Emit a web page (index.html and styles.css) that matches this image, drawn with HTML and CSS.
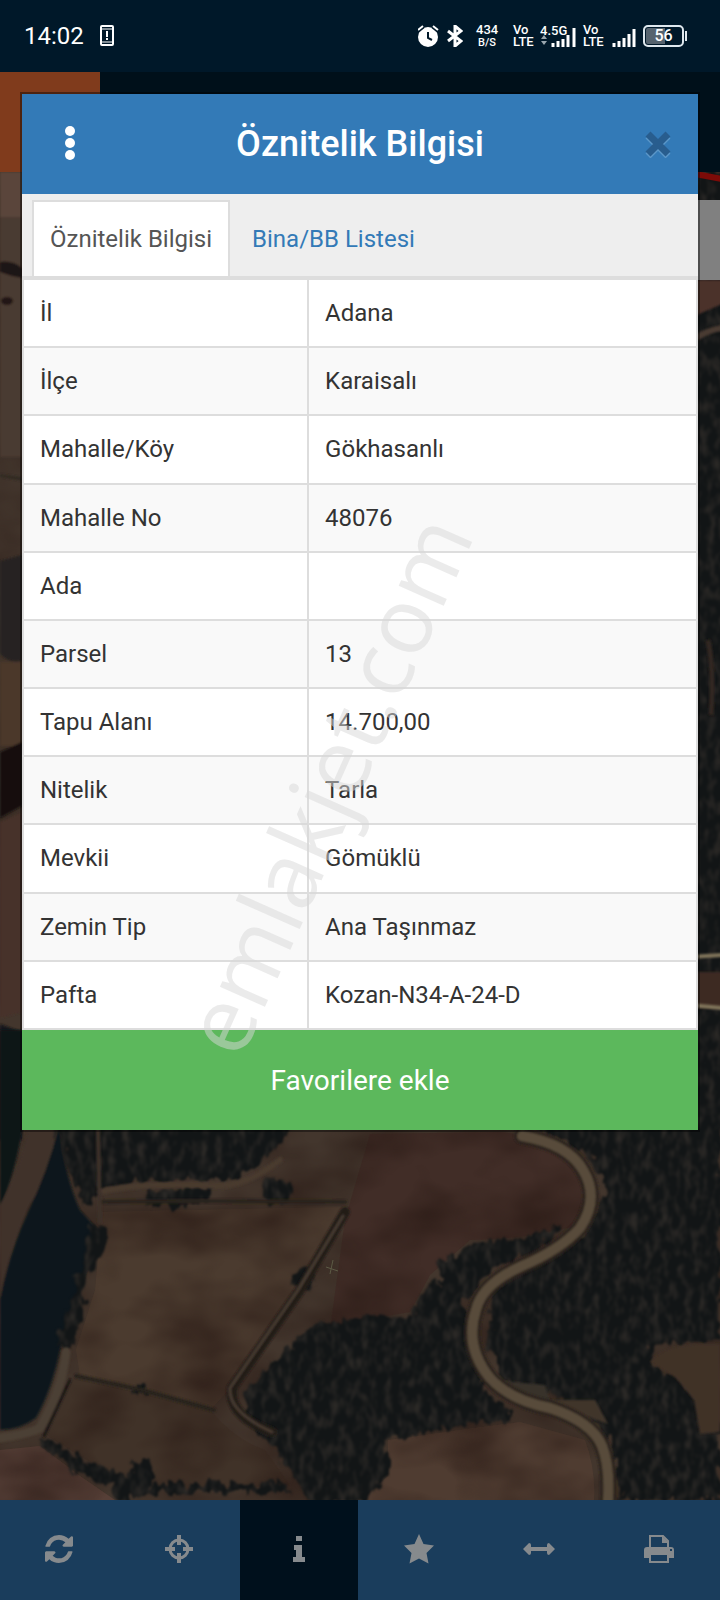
FILE: index.html
```html
<!DOCTYPE html>
<html lang="tr">
<head>
    <meta charset="UTF-8">
    <meta name="viewport" content="width=device-width, initial-scale=1.0">
    <title>Öznitelik Bilgisi</title>
    <link rel="stylesheet" href="styles.css">
</head>
<body>
    <!-- Harita -->
    <svg class="map" viewBox="0 0 720 1600" preserveAspectRatio="xMidYMid slice" aria-hidden="true">
        <defs>
            <filter id="trees" x="-5%" y="-5%" width="110%" height="110%" color-interpolation-filters="sRGB">
                <feTurbulence type="fractalNoise" baseFrequency="0.13 0.07" numOctaves="2" seed="4" result="noise"/>
                <feDisplacementMap in="SourceGraphic" in2="noise" scale="18" xChannelSelector="R" yChannelSelector="G" result="shape"/>
                <feColorMatrix in="noise" type="matrix" values="0 0 0 0 0.17  0 0 0 0 0.16  0 0 0 0 0.15  2.6 0 0 0 -1.1" result="light"/>
                <feComposite in="light" in2="shape" operator="in" result="crowns"/>
                <feMerge result="wood"><feMergeNode in="shape"/><feMergeNode in="crowns"/></feMerge>
                <feGaussianBlur in="wood" stdDeviation="0.8"/>
            </filter>
            <filter id="soil" x="0" y="0" width="100%" height="100%" color-interpolation-filters="sRGB">
                <feTurbulence type="fractalNoise" baseFrequency="0.012 0.02" numOctaves="3" seed="9" result="noise"/>
                <feColorMatrix in="noise" type="matrix" values="0 0 0 0 0.16  0 0 0 0 0.10  0 0 0 0 0.08  1.3 0 0 0 -0.45" result="dark"/>
                <feComposite in="dark" in2="SourceGraphic" operator="in" result="patches"/>
                <feMerge><feMergeNode in="SourceGraphic"/><feMergeNode in="patches"/></feMerge>
            </filter>
            <filter id="soft"><feGaussianBlur stdDeviation="1"/></filter>
        </defs>

        <rect width="720" height="1600" fill="#43362d" filter="url(#soil)"/>

        <!-- sol kenar -->
        <g filter="url(#soft)">
            <path d="M0 172h22v45H0z" fill="#5a443b"/>
            <path d="M0 217h22v240H0z" fill="#4a3a30"/>
            <path d="M0 262q12-2 22 6v10q-12-2-22-6z" fill="#1d1715"/>
            <ellipse cx="7" cy="301" rx="6" ry="4" fill="#211815"/>
            <path d="M0 474l22 3v4l-22-4z" fill="#302b22"/>
            <path d="M0 561l22-6v105q-10 5-22-6z" fill="#262320"/>
            <path d="M0 662h22v84H0z" fill="#4b372c"/>
            <path d="M0 752l22-10v64l-22 12z" fill="#13110e"/>
            <path d="M0 822l22-10v200l-22 6z" fill="#473229"/>
            <path d="M0 1024l22 8v108H0z" fill="#14191a"/>
        </g>

        <!-- su -->
        <g filter="url(#soft)">
            <path d="M0 1030H30Q28 1150 0 1206z" fill="#101416"/>
            <path d="M28 1130H56Q52 1175 30 1204Q8 1250 0 1300V1205Q20 1170 28 1130z" fill="#3f3329"/>
            <path d="M60 1130Q66 1180 80 1210L100 1232Q88 1270 72 1310L60 1350Q52 1390 36 1418Q20 1430 0 1430V1300Q10 1250 28 1212Q48 1170 58 1130z" fill="#0d191c"/>
        </g>

        <!-- tarlalar -->
        <g filter="url(#soil)">
            <path d="M102 1212L345 1207L342 1220L300 1286L228 1390L212 1408L80 1376L76 1350L95 1290z" fill="#4b3b2f"/>
            <path d="M74 1378L210 1410Q235 1440 265 1450L290 1485L180 1490L110 1474L48 1436z" fill="#403228"/>
            <path d="M0 1450L40 1446L80 1476L115 1500H0z" fill="#563f37"/>
            <path d="M370 1134L500 1132Q570 1140 586 1170Q596 1200 575 1226Q520 1240 470 1240L430 1275L410 1312L375 1318L330 1330L345 1220z" fill="#412d27"/>
            <path d="M388 1440L520 1422L585 1440Q596 1470 594 1500H360L388 1476z" fill="#4f3c31"/>
        </g>

        <!-- ormanlar -->
        <g fill="#121516" filter="url(#trees)">
            <path d="M55 1125L290 1125L275 1150L238 1178L140 1182L100 1190L86 1205L72 1180z"/>
            <path d="M145 1192L210 1186L212 1202L148 1208z"/>
            <ellipse cx="278" cy="1191" rx="15" ry="14"/>
            <ellipse cx="303" cy="1280" rx="12" ry="11"/>
            <ellipse cx="141" cy="1389" rx="7" ry="5"/>
            <path d="M92 1225L106 1228L104 1250L88 1280L74 1345L58 1344L70 1305z"/>
            <path d="M40 1440L56 1442L90 1466L128 1474L134 1460L152 1460L152 1484L285 1484L290 1492L152 1492L118 1502L112 1486L72 1470z"/>
            <path d="M310 1328L370 1315L412 1318L430 1282L460 1290L466 1330L485 1392L510 1410L510 1420L430 1430L386 1440L388 1476L360 1502H310L285 1460L245 1418L245 1392L270 1366z"/>
            <path d="M470 1244L520 1238L562 1226L540 1250L490 1270L468 1300L440 1290L440 1262z"/>
            <path d="M500 1125H720V1340L650 1345L655 1365L700 1400L720 1430V1500H620L612 1450L596 1418L560 1398L502 1382L488 1340L494 1290L520 1268L590 1230L606 1190L592 1156L550 1132z"/>
            <path d="M690 172h40v960h-40z"/>
        </g>

        <!-- ağaçsız alanlar -->
        <g filter="url(#soft)">
            <path d="M650 1362Q664 1342 720 1344V1432L700 1434L694 1400L676 1378z" fill="#3f3026"/>
            <path d="M690 280h32v24l-32 14z" fill="#4b3129"/>
            <path d="M690 972h32v36h-32z" fill="#3d2b24"/>
            <path d="M696 338q12-8 26-10" fill="none" stroke="#493a32" stroke-width="6"/>
            <path d="M708 640q6 30 3 75" fill="none" stroke="#302720" stroke-width="5"/>
            <path d="M550 1400L595 1400L608 1424L570 1410z" fill="#41342b"/>
            <path d="M490 1380L545 1385L550 1402L510 1398z" fill="#38322a"/>
        </g>

        <!-- yollar -->
        <g fill="none" stroke-linecap="round" filter="url(#soft)">
            <path d="M522 1136Q568 1144 583 1170Q600 1198 580 1228Q560 1250 522 1266Q482 1284 476 1310Q464 1346 490 1378Q510 1400 550 1408Q592 1422 602 1446Q610 1466 608 1500" stroke="#2b241f" stroke-width="16"/>
            <path d="M522 1136Q568 1144 583 1170Q600 1198 580 1228Q560 1250 522 1266Q482 1284 476 1310Q464 1346 490 1378Q510 1400 550 1408Q592 1422 602 1446Q610 1466 608 1500" stroke="#584b3b" stroke-width="10"/>
            <path d="M345 1212L300 1290L232 1388Q228 1416 272 1432" stroke="#211c18" stroke-width="10"/>
            <path d="M343 1216L298 1290L230 1388Q228 1412 272 1432" stroke="#463a32" stroke-width="3"/>
            <path d="M100 1202Q180 1200 345 1202" stroke="#29241c" stroke-width="4"/>
            <path d="M100 1192Q140 1182 220 1186Q250 1184 280 1160" stroke="#483a2f" stroke-width="6"/>
            <path d="M98 1130L100 1222" stroke="#3d302a" stroke-width="4"/>
            <path d="M76 1376L142 1390L214 1410" stroke="#27211a" stroke-width="4"/>
            <path d="M0 1438Q28 1434 40 1428Q62 1390 66 1352" stroke="#4b3f34" stroke-width="9"/>
            <path d="M44 1436L70 1380" stroke="#1a1613" stroke-width="3"/>
            <path d="M690 957l32-2" stroke="#80745a" stroke-width="4"/>
            <path d="M690 1005l32 3" stroke="#80745a" stroke-width="4"/>
        </g>
        <path d="M326 1267l12 4M333 1260l-3 14" stroke="#5c5a45" stroke-width="1"/>
        <path d="M690 173l32 6" stroke="#7c0b08" stroke-width="6"/>
        <rect x="600" y="200" width="120" height="80" fill="#808080"/>
    </svg>

    <div class="app-header"><div class="app-logo"></div></div>

    <!-- Durum çubuğu -->
    <div class="status-bar">
        <span class="clock">14:02</span>
        <svg class="notice" width="14" height="22" viewBox="0 0 14 22">
            <rect x="1" y="1" width="12" height="19" rx="1" fill="none" stroke="#fff" stroke-width="2"/>
            <path d="M1 4h12M1 17h12" stroke="#fff" stroke-width="1"/>
            <path d="M7 6v6M7 13v2" stroke="#fff" stroke-width="2"/>
        </svg>

        <div class="status-right">
            <svg width="22" height="22" viewBox="0 0 22 22">
                <circle cx="10" cy="12" r="10" fill="#fff"/>
                <path d="M0 5l5-4M20 5l-5-4" stroke="#001829" stroke-width="5"/>
                <path d="M0 5l5-4M20 5l-5-4" stroke="#fff" stroke-width="2"/>
                <path d="M10 7v6l4 2" fill="none" stroke="#001829" stroke-width="2"/>
            </svg>
            <svg class="bluetooth" width="16" height="22" viewBox="0 0 16 22">
                <path d="M1 6l13 10-6 5V1l6 5L1 16" fill="none" stroke="#fff" stroke-width="3"/>
            </svg>
            <div class="speed">434<br><small>B/S</small></div>
            <div class="volte">Vo<br>LTE</div>
            <svg width="36" height="24" viewBox="0 0 36 24">
                <text x="0" y="11" class="net">4.5G</text>
                <path d="M1 15l3-4 3 4zM1 17l3 4 3-4z" fill="#9ba7af"/>
                <path d="M13 23v-4M18 23v-6M23 23v-8M28 23V11M34 23V4" stroke="#fff" stroke-width="3"/>
            </svg>
            <div class="volte">Vo<br>LTE</div>
            <svg width="26" height="24" viewBox="0 0 26 24">
                <path d="M4 23v-4M9 23v-6M14 23v-9M19 23V10M24 23V5" stroke="#fff" stroke-width="3"/>
            </svg>
            <div class="battery">56</div>
        </div>
    </div>

    <!-- Pencere -->
    <div class="modal">
        <div class="modal-header">
            <button type="button" class="menu" aria-label="Menü">
                <svg width="10" height="36" viewBox="0 0 10 36" fill="#fff">
                    <circle cx="5" cy="5" r="5"/><circle cx="5" cy="17" r="5"/><circle cx="5" cy="29" r="5"/>
                </svg>
            </button>
            <h1>Öznitelik Bilgisi</h1>
            <button type="button" class="close" aria-label="Kapat">
                <svg width="26" height="28" viewBox="0 0 26 28" fill="none" stroke-width="7">
                    <path d="M3 6l20 20M23 6L3 26" stroke="#5b97c9"/>
                    <path d="M3 4l20 20M23 4L3 24" stroke="#285d8e"/>
                </svg>
            </button>
        </div>

        <div class="tabs">
            <a href="#oznitelik" class="active">Öznitelik Bilgisi</a>
            <a href="#bina">Bina/BB Listesi</a>
        </div>

        <table>
            <tr><th scope="row">İl</th><td>Adana</td></tr>
            <tr><th scope="row">İlçe</th><td>Karaisalı</td></tr>
            <tr><th scope="row">Mahalle/Köy</th><td>Gökhasanlı</td></tr>
            <tr><th scope="row">Mahalle No</th><td>48076</td></tr>
            <tr><th scope="row">Ada</th><td></td></tr>
            <tr><th scope="row">Parsel</th><td>13</td></tr>
            <tr><th scope="row">Tapu Alanı</th><td>14.700,00</td></tr>
            <tr><th scope="row">Nitelik</th><td>Tarla</td></tr>
            <tr><th scope="row">Mevkii</th><td>Gömüklü</td></tr>
            <tr><th scope="row">Zemin Tip</th><td>Ana Taşınmaz</td></tr>
            <tr><th scope="row">Pafta</th><td>Kozan-N34-A-24-D</td></tr>
        </table>

        <button type="button" class="favorite">Favorilere ekle</button>
        <div class="watermark">emlakjet.com</div>
    </div>

    <!-- Alt menü -->
    <nav class="toolbar">
        <button type="button" aria-label="Yenile">
            <svg width="28" height="28" viewBox="0 0 1536 1536"><path d="M1511 928q0 5-1 7-64 268-268 434.500T764 1536q-146 0-282.500-55T238 1324l-129 129q-19 19-45 19t-45-19-19-45V960q0-26 19-45t45-19h448q26 0 45 19t19 45-19 45l-137 137q71 66 161 102t187 36q134 0 250-65t186-179q11-17 53-117 8-23 30-23h192q13 0 22.500 9.500t9.500 22.500zm25-800v448q0 26-19 45t-45 19h-448q-26 0-45-19t-19-45 19-45l138-138Q969 256 768 256q-134 0-250 65T332 500q-11 17-53 117-8 23-30 23H50q-13 0-22.500-9.500T18 608v-7q65-268 270-434.500T768 0q146 0 284 55.500T1297 212l130-129q19-19 45-19t45 19 19 45z"/></svg>
        </button>
        <button type="button" aria-label="Konum">
            <svg width="28" height="28" viewBox="0 0 28 28">
                <circle cx="14" cy="14" r="9" fill="none" stroke="#868a8d" stroke-width="3"/>
                <path d="M12 0h4v10h-4zM12 18h4v10h-4zM0 12h10v4H0zM18 12h10v4H18z"/>
            </svg>
        </button>
        <button type="button" class="active" aria-label="Bilgi">
            <svg width="12" height="26" viewBox="0 0 12 26"><path d="M3 0h6v5H3zM1 9h8v12h3v5H0v-5h3v-7H1z" stroke-linejoin="round"/></svg>
        </button>
        <button type="button" aria-label="Favoriler">
            <svg width="30" height="30" viewBox="0 0 30 30"><path d="M15 0l4.500 10 10.500 1.500-7.500 7.500 2 10.500-9.500-5-9.500 5 2-10.500L0 11.500 10.500 10z"/></svg>
        </button>
        <button type="button" aria-label="Ölçüm">
            <svg width="32" height="14" viewBox="0 0 32 14"><path d="M0 7l6-6q2 0 2 2v2h16V3q0-2 2-2l6 6-6 6q-2 0-2-2V9H8v2q0 2-2 2z"/></svg>
        </button>
        <button type="button" aria-label="Yazdır">
            <svg width="30" height="28" viewBox="0 0 30 28">
                <path d="M6 14V1h13l5 5v8" fill="none" stroke="#868a8d" stroke-width="2"/>
                <path d="M18 1v7h7z"/>
                <path fill-rule="evenodd" d="M0 23v-8q0-3 3-3h24q3 0 3 3v8h-5v5H5v-5zm7-3v6h16v-6zM26 14h2v2h-2z"/>
            </svg>
        </button>
    </nav>
</body>
</html>
```
FILE: styles.css
```css
* {
    box-sizing: border-box;
}

body {
    position: relative;
    display: flex;
    flex-direction: column;
    min-height: 100vh;
    margin: 0;
    font-family: Roboto, "Liberation Sans", sans-serif;
    font-size: 24px;
    color: #333;
    background: #2b231e;
    overflow-x: hidden;
}

button {
    font-family: inherit;
    border: none;
    padding: 0;
    cursor: pointer;
}

/* Arka plan */
.map {
    position: absolute;
    top: 0;
    left: 0;
    width: 100%;
    height: 100%;
}

.app-header {
    position: absolute;
    top: 72px;
    left: 0;
    width: 100%;
    height: 100px;
    background: #00101a;
}

.app-logo {
    width: 100px;
    height: 100%;
    background: #803b1c;
}

/* Durum çubuğu */
.status-bar {
    position: relative;
    display: flex;
    align-items: center;
    height: 72px;
    padding: 0 32px 0 24px;
    background: #001829;
    color: #fff;
}

.clock {
    font-size: 24px;
}

.notice {
    margin-left: 16px;
}

.status-right {
    display: flex;
    align-items: center;
    gap: 7px;
    margin-left: auto;
}

.bluetooth {
    margin-right: 6px;
}

.speed,
.volte {
    width: 20px;
    font-size: 13px;
    font-weight: 500;
    line-height: 12px;
}

.speed {
    width: 22px;
    margin-right: 8px;
    text-align: center;
}

.speed small {
    font-size: 11px;
}

.net {
    font-size: 13px;
    font-weight: 500;
    fill: #fff;
}

.battery {
    position: relative;
    width: 41px;
    height: 22px;
    margin-right: 4px;
    border: 2px solid #dfe8ee;
    border-radius: 5px;
    background: linear-gradient(90deg, #56636e 55%, #001829 55%);
    box-shadow: inset 0 0 0 1px #001829;
    font-size: 16px;
    font-weight: 500;
    line-height: 18px;
    text-align: center;
}

.battery::after {
    content: "";
    position: absolute;
    top: 4px;
    right: -5px;
    width: 2px;
    height: 10px;
    background: #dfe8ee;
}

/* Pencere */
.modal {
    position: relative;
    margin: 22px;
    background: #fff;
    box-shadow: 0 0 0 2px rgba(0, 0, 0, 0.4);
}

.modal-header {
    display: flex;
    align-items: center;
    justify-content: space-between;
    height: 100px;
    padding: 0 27px 0 43px;
    background: #337ab7;
}

.modal-header button {
    display: flex;
    background: none;
}

.modal-header h1 {
    margin: 0;
    font-size: 36px;
    font-weight: 500;
    color: #fff;
}

.tabs {
    display: flex;
    gap: 4px;
    padding: 6px 10px 0;
    background: #eee;
    border-bottom: 2px solid #ddd;
}

.tabs a {
    padding: 23px 16px;
    border: 2px solid transparent;
    border-bottom: none;
    line-height: 28px;
    color: #337ab7;
    text-decoration: none;
}

.tabs a.active {
    border-color: #ddd;
    background: #fff;
    color: #555;
}

table {
    width: 100%;
    height: 47vh;
    border-collapse: collapse;
}

th,
td {
    padding: 0 16px;
    border: 2px solid #ddd;
    font-weight: 400;
    text-align: left;
}

th {
    width: 42.3%;
}

tr:nth-child(even) {
    background: #f9f9f9;
}

.favorite {
    display: block;
    width: 100%;
    height: 100px;
    background: #5cb85c;
    color: #fff;
    font-size: 28px;
}

.watermark {
    position: absolute;
    top: 55%;
    left: 45%;
    font-family: "Open Sans", sans-serif;
    font-size: 92px;
    line-height: 120px;
    color: rgba(215, 215, 215, 0.5);
    transform: translate(-50%, 50%) rotate(-66deg);
    pointer-events: none;
}

/* Alt menü */
.toolbar {
    position: relative;
    display: flex;
    height: 100px;
    margin-top: auto;
    background: #1a3d5c;
}

.toolbar button {
    display: flex;
    flex: 1;
    align-items: center;
    justify-content: center;
    padding-bottom: 2px;
    border-right: 2px solid #1a3d5c;
    background: none;
}

.toolbar button.active {
    background: #00101c;
}

.toolbar svg {
    fill: #868a8d;
}
```
